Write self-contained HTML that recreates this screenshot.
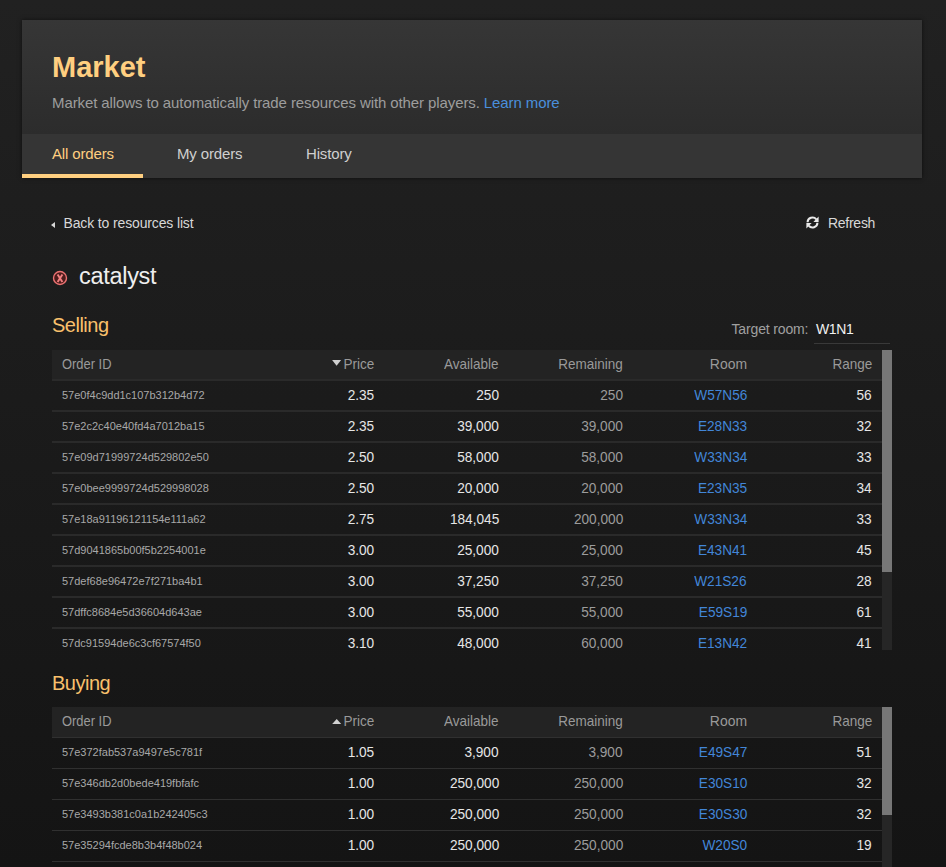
<!DOCTYPE html>
<html><head><meta charset="utf-8">
<style>
*{box-sizing:border-box;margin:0;padding:0}
html,body{width:946px;height:867px;overflow:hidden}
body{position:relative;font-family:"Liberation Sans",sans-serif;background:linear-gradient(#212121,#141414);color:#ddd}
.abs{position:absolute;white-space:nowrap}
#hdr{position:absolute;left:22px;top:20px;width:900px;height:158px;background:linear-gradient(#363636,#2c2c2c 114px,#353535 114px);box-shadow:0 0 4px rgba(0,0,0,.6)}
#tabs{position:absolute;left:0;top:114px;width:900px;height:44px;background:#353535}
.title{left:30px;top:30px;font-size:29px;font-weight:bold;color:#ffcf80;line-height:34px}
.sub{left:30px;top:73.7px;font-size:15px;letter-spacing:-0.1px;color:#9d9d9d;line-height:18px}
.lnk{color:#4a8fdc}
.tab{top:-2px;height:44px;line-height:44px;font-size:15px;letter-spacing:-0.15px;color:#cfcfcf}
.tab.act{color:#ffcf80}
.uline{position:absolute;left:0;top:40px;width:121px;height:4px;background:#ffcf80}
.back{left:51px;top:213.5px;font-size:14px;letter-spacing:-0.14px;color:#d8d8d8;line-height:18px}
.ltri{display:inline-block;width:0;height:0;border-top:3.3px solid transparent;border-bottom:3.3px solid transparent;border-right:4.5px solid #d8d8d8;margin-right:8.5px;vertical-align:0px}
.refresh{left:828px;top:213.5px;font-size:14px;letter-spacing:-0.27px;color:#d8d8d8;line-height:18px}
.res{left:79px;top:261.5px;font-size:23.5px;letter-spacing:-0.3px;color:#eee;line-height:28px}
.sec{left:52px;font-size:20px;letter-spacing:-0.5px;color:#f9c06c;line-height:22px}
.troom{left:731.5px;top:319.5px;font-size:14px;letter-spacing:-0.15px;color:#a0a0a0;line-height:18px}
.tval{left:816px;top:319.5px;font-size:14px;letter-spacing:-0.4px;color:#f0f0f0;line-height:18px}
.tline{position:absolute;left:814px;top:343px;width:76px;height:1px;background:#393939}
.tbl{position:absolute;left:52px;width:840px;overflow:hidden}
.th{position:absolute;left:0;top:0;width:830px;height:29px;background:#232323}
.row{position:absolute;left:0;width:830px;height:31px;border-top:2px solid #2a2a2a}
.c{position:absolute;top:-1.5px;white-space:nowrap;line-height:29px;font-size:15px}
.c>i{display:inline-block;font-style:normal;transform:scaleX(.91);transform-origin:100% 50%}
.h>i{transform:scaleX(.9)}
.h.rm>i{transform:scaleX(.9)}
.h.ro2>i{transform:scaleX(.93)}
.h.id2>i{transform-origin:0 50%;transform:scaleX(.86)}
.id>i{transform:none}
.h{color:#9a9a9a;top:-1px}
.id2{left:9.5px}
.id{left:10px;font-size:11px;color:#a8a8a8;top:-0.5px}
.pr{right:508px;color:#e6e6e6}
.av{right:383px;color:#e6e6e6}
.rm{right:259px;color:#9c9c9c}
.ro,.ro2{right:135px;color:#4286d8}
.ro2{color:#9a9a9a}
.rg{right:10px;color:#e6e6e6}
.h.rg,.h.pr,.h.av,.h.rm{color:#9a9a9a}
.tri{position:absolute;left:280px;top:10.5px;width:0;height:0;border-left:4.6px solid transparent;border-right:4.6px solid transparent}
.tri.down{border-top:5.6px solid #d0d0d0}
.tri.up{border-bottom:5.6px solid #d0d0d0;top:12.5px}
.sb{position:absolute;left:830px;top:0;width:10px;background:#262626}
.thumb{position:absolute;left:830px;top:0;width:10px;background:#777}

.buy .row{border-top:1px solid #303030}
.buy .row .c{top:-1.5px}
.buy .row .c.id{top:-0.5px}
.buy .th{height:30px}

.tri2{position:absolute;left:280px}

</style></head><body>
<div id="hdr">
  <div class="abs title">Market</div>
  <div class="abs sub">Market allows to automatically trade resources with other players. <span class="lnk">Learn more</span></div>
  <div id="tabs">
    <div class="abs tab act" style="left:30px">All orders</div>
    <div class="abs tab" style="left:155px">My orders</div>
    <div class="abs tab" style="left:284px">History</div>
    <div class="uline"></div>
  </div>
</div>
<div class="abs back"><span class="ltri"></span>Back to resources list</div>
<svg class="abs" style="left:806px;top:216.1px" width="13" height="13" viewBox="0 0 13 13">
  <path d="M1.55 6.3 A4.95 4.95 0 0 1 10.3 3.3" fill="none" stroke="#e8e8e8" stroke-width="2"/>
  <path d="M12.6 0.6 L12.6 6 L7.4 6 Z" fill="#e8e8e8"/>
  <path d="M11.45 6.7 A4.95 4.95 0 0 1 2.7 9.7" fill="none" stroke="#e8e8e8" stroke-width="2"/>
  <path d="M0.4 12.4 L0.4 7 L5.6 7 Z" fill="#e8e8e8"/>
</svg>
<div class="abs refresh">Refresh</div>
<svg class="abs" style="left:52px;top:270px" width="16" height="16" viewBox="0 0 16 16">
  <circle cx="8" cy="8" r="6.5" fill="#4e1c1c" stroke="#ec7272" stroke-width="1.4"/>
  <path d="M5.6 4.5 L10.4 12 M10.4 4.5 L5.6 12" stroke="#f28080" stroke-width="1.9"/>
</svg>
<div class="abs res">catalyst</div>
<div class="abs sec" style="top:314px">Selling</div>
<div class="abs troom">Target room:</div>
<div class="abs tval">W1N1</div>
<div class="tline"></div>
<div class="tbl " style="top:350px;height:300px">
<div class="th"><span class="c h id2"><i>Order ID</i></span><svg class="tri2" style="top:10.2px" width="10" height="6" viewBox="0 0 10 6"><path d="M0.1 0.1 H9.1 L4.6 5.7 Z" fill="#d0d0d0"/></svg><span class="c h pr"><i>Price</i></span><span class="c h av"><i>Available</i></span><span class="c h rm"><i>Remaining</i></span><span class="c h ro2"><i>Room</i></span><span class="c h rg"><i>Range</i></span></div>
<div class="row" style="top:29px"><span class="c id">57e0f4c9dd1c107b312b4d72</span><span class="c pr"><i>2.35</i></span><span class="c av"><i>250</i></span><span class="c rm"><i>250</i></span><span class="c ro"><i>W57N56</i></span><span class="c rg"><i>56</i></span></div>
<div class="row" style="top:60px"><span class="c id">57e2c2c40e40fd4a7012ba15</span><span class="c pr"><i>2.35</i></span><span class="c av"><i>39,000</i></span><span class="c rm"><i>39,000</i></span><span class="c ro"><i>E28N33</i></span><span class="c rg"><i>32</i></span></div>
<div class="row" style="top:91px"><span class="c id">57e09d71999724d529802e50</span><span class="c pr"><i>2.50</i></span><span class="c av"><i>58,000</i></span><span class="c rm"><i>58,000</i></span><span class="c ro"><i>W33N34</i></span><span class="c rg"><i>33</i></span></div>
<div class="row" style="top:122px"><span class="c id">57e0bee9999724d529998028</span><span class="c pr"><i>2.50</i></span><span class="c av"><i>20,000</i></span><span class="c rm"><i>20,000</i></span><span class="c ro"><i>E23N35</i></span><span class="c rg"><i>34</i></span></div>
<div class="row" style="top:153px"><span class="c id">57e18a91196121154e111a62</span><span class="c pr"><i>2.75</i></span><span class="c av"><i>184,045</i></span><span class="c rm"><i>200,000</i></span><span class="c ro"><i>W33N34</i></span><span class="c rg"><i>33</i></span></div>
<div class="row" style="top:184px"><span class="c id">57d9041865b00f5b2254001e</span><span class="c pr"><i>3.00</i></span><span class="c av"><i>25,000</i></span><span class="c rm"><i>25,000</i></span><span class="c ro"><i>E43N41</i></span><span class="c rg"><i>45</i></span></div>
<div class="row" style="top:215px"><span class="c id">57def68e96472e7f271ba4b1</span><span class="c pr"><i>3.00</i></span><span class="c av"><i>37,250</i></span><span class="c rm"><i>37,250</i></span><span class="c ro"><i>W21S26</i></span><span class="c rg"><i>28</i></span></div>
<div class="row" style="top:246px"><span class="c id">57dffc8684e5d36604d643ae</span><span class="c pr"><i>3.00</i></span><span class="c av"><i>55,000</i></span><span class="c rm"><i>55,000</i></span><span class="c ro"><i>E59S19</i></span><span class="c rg"><i>61</i></span></div>
<div class="row" style="top:277px"><span class="c id">57dc91594de6c3cf67574f50</span><span class="c pr"><i>3.10</i></span><span class="c av"><i>48,000</i></span><span class="c rm"><i>60,000</i></span><span class="c ro"><i>E13N42</i></span><span class="c rg"><i>41</i></span></div>
<div class="sb" style="height:300px"></div>
<div class="thumb" style="height:222px"></div>
</div>
<div class="abs sec" style="top:672px">Buying</div>
<div class="tbl buy" style="top:707px;height:200px">
<div class="th"><span class="c h id2"><i>Order ID</i></span><svg class="tri2" style="top:12.4px" width="10" height="6" viewBox="0 0 10 6"><path d="M0.2 5 H9.2 L4.7 0 Z" fill="#d0d0d0"/></svg><span class="c h pr"><i>Price</i></span><span class="c h av"><i>Available</i></span><span class="c h rm"><i>Remaining</i></span><span class="c h ro2"><i>Room</i></span><span class="c h rg"><i>Range</i></span></div>
<div class="row" style="top:30px"><span class="c id">57e372fab537a9497e5c781f</span><span class="c pr"><i>1.05</i></span><span class="c av"><i>3,900</i></span><span class="c rm"><i>3,900</i></span><span class="c ro"><i>E49S47</i></span><span class="c rg"><i>51</i></span></div>
<div class="row" style="top:61px"><span class="c id">57e346db2d0bede419fbfafc</span><span class="c pr"><i>1.00</i></span><span class="c av"><i>250,000</i></span><span class="c rm"><i>250,000</i></span><span class="c ro"><i>E30S10</i></span><span class="c rg"><i>32</i></span></div>
<div class="row" style="top:92px"><span class="c id">57e3493b381c0a1b242405c3</span><span class="c pr"><i>1.00</i></span><span class="c av"><i>250,000</i></span><span class="c rm"><i>250,000</i></span><span class="c ro"><i>E30S30</i></span><span class="c rg"><i>32</i></span></div>
<div class="row" style="top:123px"><span class="c id">57e35294fcde8b3b4f48b024</span><span class="c pr"><i>1.00</i></span><span class="c av"><i>250,000</i></span><span class="c rm"><i>250,000</i></span><span class="c ro"><i>W20S0</i></span><span class="c rg"><i>19</i></span></div>
<div class="row" style="top:154px"><span class="c id"></span><span class="c pr"><i></i></span><span class="c av"><i></i></span><span class="c rm"><i></i></span><span class="c ro"><i></i></span><span class="c rg"><i></i></span></div>
<div class="sb" style="height:200px"></div>
<div class="thumb" style="height:108px"></div>
</div>
</body></html>
